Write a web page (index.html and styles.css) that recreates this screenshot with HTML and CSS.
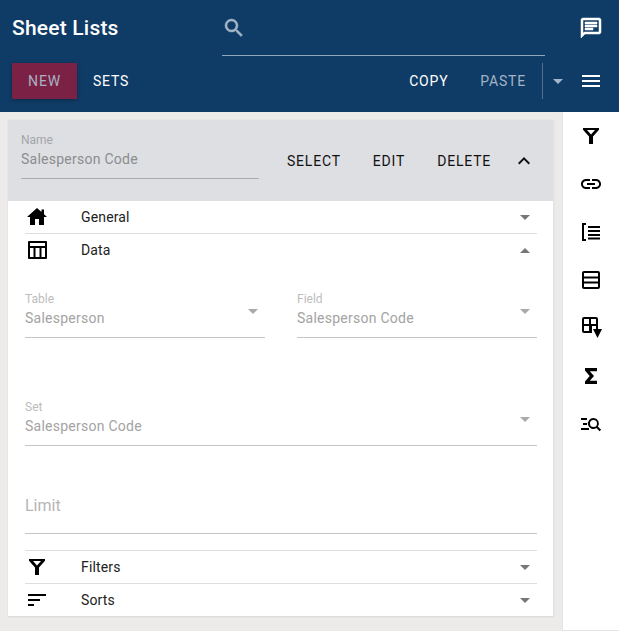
FILE: index.html
```html
<!DOCTYPE html>
<html lang="en">
<head>
<meta charset="utf-8">
<title>Sheet Lists</title>
<link rel="stylesheet" href="styles.css">
</head>
<body>
<header class="appbar">
  <div class="appbar-top">
    <h1 class="title">Sheet Lists</h1>
    <div class="search">
      <svg class="search-icon" viewBox="0 0 24 24"><path d="M15.500 14h-.79l-.28-.27A6.471 6.471 0 0 0 16 9.500 6.500 6.500 0 1 0 9.500 16c1.610 0 3.090-.59 4.230-1.570l.27.28v.79l5 4.990L20.490 19l-4.990-5zm-6 0C7.010 14 5 11.990 5 9.500S7.010 5 9.500 5 14 7.010 14 9.500 11.990 14 9.500 14z"/></svg>
    </div>
    <svg class="chat-icon" viewBox="0 0 24 24"><path d="M20 2H4c-1.100 0-2 .9-2 2v18l4-4h14c1.100 0 2-.9 2-2V4c0-1.100-.9-2-2-2zm0 14H5.200L4 17.200V4h16v12zM6 12h8v2H6zm0-3h12v2H6zm0-3h12v2H6z"/></svg>
  </div>
  <div class="appbar-actions">
    <button class="btn-new">NEW</button>
    <button class="btn-flat btn-sets">SETS</button>
    <span class="spacer"></span>
    <button class="btn-flat btn-copy">COPY</button>
    <button class="btn-flat btn-paste">PASTE</button>
    <span class="divider"></span>
    <span class="caret caret-light"></span>
    <svg class="menu-icon" viewBox="0 0 24 24"><path d="M3 18h18v-2H3v2zm0-5h18v-2H3v2zm0-7v2h18V6H3z"/></svg>
  </div>
</header>
<div class="workspace">
  <main class="content">
    <section class="card">
      <div class="card-head">
        <div class="name-field">
          <span class="head-label">Name</span>
          <span class="head-value">Salesperson Code</span>
        </div>
        <div class="head-actions">
          <button class="btn-text btn-select">SELECT</button>
          <button class="btn-text btn-edit">EDIT</button>
          <button class="btn-text btn-delete">DELETE</button>
          <svg class="chevron" viewBox="0 0 24 24"><path d="M7.410 15.410 12 10.830l4.590 4.580L18 14l-6-6-6 6z"/></svg>
        </div>
      </div>
      <div class="card-body">
        <div class="row row-rule">
          <svg class="row-icon" viewBox="0 0 24 24"><path d="M10 20v-6h4v6h5v-8h3l-3-2.700V4.500h-2.500v2.600L12 3 2 12h3v8z"/></svg>
          <span class="row-label">General</span>
          <span class="caret"></span>
        </div>
        <div class="row row-data">
          <svg class="row-icon" viewBox="0 0 24 24"><path d="M4 3h17a1 1 0 0 1 1 1v16a1 1 0 0 1-1 1H4a1 1 0 0 1-1-1V4a1 1 0 0 1 1-1zm1 2v3h15V5H5zm0 5v9h3.500v-9H5zm5.500 0v9h4v-9h-4zm6 0v9H20v-9h-3.500z"/></svg>
          <span class="row-label">Data</span>
          <span class="caret caret-up"></span>
        </div>
        <div class="form">
          <div class="form-pair">
            <div class="select">
              <span class="select-label">Table</span>
              <span class="select-value">Salesperson</span>
              <span class="caret caret-field"></span>
            </div>
            <div class="select">
              <span class="select-label">Field</span>
              <span class="select-value">Salesperson Code</span>
              <span class="caret caret-field"></span>
            </div>
          </div>
          <div class="select select-set">
            <span class="select-label">Set</span>
            <span class="select-value">Salesperson Code</span>
            <span class="caret caret-field"></span>
          </div>
          <div class="limit">Limit</div>
        </div>
        <div class="row row-rule row-top">
          <svg class="row-icon" viewBox="0 0 24 24"><path d="M4 4h16v1.800l-6 6.700V20h-4v-7.500L4 5.800V4zm4 2 4 4.500L16 6H8z"/></svg>
          <span class="row-label">Filters</span>
          <span class="caret"></span>
        </div>
        <div class="row row-last">
          <svg class="row-icon" viewBox="0 0 24 24"><path d="M3 18h6v-2H3v2zM3 6v2h18V6H3zm0 7h12v-2H3v2z"/></svg>
          <span class="row-label">Sorts</span>
          <span class="caret"></span>
        </div>
      </div>
    </section>
  </main>
  <aside class="rail">
    <svg class="rail-icon" viewBox="0 0 24 24"><path d="M4 4h16v1.800l-6 6.700V20h-4v-7.500L4 5.800V4zm4 2 4 4.500L16 6H8z"/></svg>
    <svg class="rail-icon" viewBox="0 0 24 24"><path d="M3.900 12c0-1.710 1.390-3.100 3.100-3.100h4V7H7c-2.760 0-5 2.240-5 5s2.240 5 5 5h4v-1.900H7c-1.710 0-3.100-1.390-3.100-3.100zM8 13h8v-2H8v2zm9-6h-4v1.900h4c1.710 0 3.100 1.390 3.100 3.100s-1.390 3.100-3.100 3.100h-4V17h4c2.760 0 5-2.240 5-5s-2.240-5-5-5z"/></svg>
    <svg class="rail-icon" viewBox="0 0 24 24"><path d="M3 3h4v2H5v14h2v2H3V3zm6 3h12v2H9V6zm0 4h12v2H9v-2zm0 4h12v2H9v-2zm0 3.500h12v2H9v-2z"/></svg>
    <svg class="rail-icon" viewBox="0 0 24 24"><path d="M5 3h14a2 2 0 0 1 2 2v14a2 2 0 0 1-2 2H5a2 2 0 0 1-2-2V5a2 2 0 0 1 2-2zm0 2v3.500h14V5H5zm0 5.500v3h14v-3H5zm0 5V19h14v-3.500H5z"/></svg>
    <svg class="rail-icon" viewBox="0 0 24 24"><path d="M5 1h12a2 2 0 0 1 2 2v10h-2V10h-4v7H5a2 2 0 0 1-2-2V3a2 2 0 0 1 2-2zm0 2v5h5V3H5zm7 0v5h5V3h-5zM5 10v5h5v-5H5z"/><path d="M14 13h9l-4.500 9L14 13z"/></svg>
    <svg class="rail-icon" viewBox="0 0 24 24"><path d="M6 4h12v3.200h-7.200l4.200 4.800-4.200 4.800H18V20H6v-2.600l4.700-5.400L6 6.600V4z"/></svg>
    <svg class="rail-icon" viewBox="0 0 24 24"><path d="M2 6h6v2H2V6zm2 5h4v2H4v-2zm-2 5h8v2H2v-2zM14.500 6a5.500 5.500 0 0 1 4.400 8.600l3.200 3.200-1.500 1.500-3.200-3.200A5.500 5.500 0 1 1 14.500 6zm0 2a3.500 3.500 0 1 0 0 7 3.500 3.500 0 0 0 0-7z"/></svg>
  </aside>
</div>
</body>
</html>
```
FILE: styles.css
```css
* { box-sizing: border-box; }
html, body { margin: 0; height: 100%; }
body {
  display: flex;
  flex-direction: column;
  height: 631px;
  overflow: hidden;
  font-family: Roboto, "Liberation Sans", sans-serif;
  background: #ecebe9;
}
button { font: inherit; background: none; border: 0; padding: 0; cursor: pointer; letter-spacing: .8px; }
svg { fill-rule: evenodd; }

.appbar { height: 112px; flex: none; background: #0f3c66; color: #fff; }
.appbar-top { height: 56px; display: flex; align-items: flex-start; padding-left: 12px; }
.title { width: 210px; margin: 14px 0 0; font-size: 21px; line-height: 28px; font-weight: 500; letter-spacing: .2px; }
.search { width: 323px; height: 56px; border-bottom: 1px solid #8fa5ba; padding: 16px 0 0; }
.search-icon { display: block; width: 24px; height: 24px; fill: #a5b6c6; stroke: #a5b6c6; stroke-width: .5; }
.chat-icon { width: 24px; height: 24px; fill: #fff; stroke: #fff; stroke-width: .5; margin: 16px 0 0 34px; }
.appbar-actions { height: 56px; display: flex; align-items: center; padding: 0 16px 6px 12px; }
.btn-new { width: 65px; height: 36px; background: #7c2146; color: #a9b1c2; font-size: 14px; box-shadow: 0 1px 4px rgba(0,0,0,.35); }
.btn-flat { font-size: 14px; color: #fff; }
.btn-sets { margin-left: 16px; }
.spacer { flex: 1; }
.btn-paste { margin-left: 32px; color: #a5b3c4; }
.divider { width: 1px; height: 36px; background: #51708d; margin-left: 16px; }
.caret { width: 0; height: 0; border-left: 5px solid transparent; border-right: 5px solid transparent; border-top: 5px solid #777; }
.caret-light { border-top-color: #a5b6c6; margin-left: 10px; }
.menu-icon { width: 24px; height: 24px; fill: #fff; margin-left: 16px; }

.workspace { flex: 1; display: flex; min-height: 0; }
.content { flex: 1; padding: 8px 8px 14px 8px; }
.card { height: 497px; background: #fff; box-shadow: 0 0 1px #cfcfcf; border-bottom: 1px solid #ddd; border-right: 1px solid #e2e2e2; display: flex; flex-direction: column; }
.card-head { height: 81px; flex: none; background: #dedfe3; display: flex; padding: 13px 0 0 13px; }
.name-field { width: 238px; height: 46px; border-bottom: 1px solid #a9aaad; display: flex; flex-direction: column; }
.head-label { font-size: 12px; line-height: 14px; color: #a4a5a8; }
.head-value { font-size: 14px; line-height: 18px; margin-top: 3px; letter-spacing: .25px; color: #8b8c8f; }
.head-actions { flex: 1; display: flex; align-items: center; height: 56px; padding-left: 28px; }
.btn-text { font-size: 14px; color: #111; }
.btn-edit { margin-left: 32px; }
.btn-delete { margin-left: 32px; }
.chevron { width: 24px; height: 24px; margin-left: 21px; fill: #111; }
.card-body { flex: 1; padding: 0 16px 0 17px; display: flex; flex-direction: column; }
.row { height: 33px; flex: none; display: flex; align-items: center; padding-right: 7px; }
.row-rule { border-bottom: 1px solid #dedede; }
.row-top { border-top: 1px solid #dedede; height: 34px; }
.row-data { padding-bottom: 1px; }
.row-last { height: 32px; }
.row-icon { width: 24px; height: 24px; margin-right: 32px; fill: #000; flex: none; }
.row-label { flex: 1; font-size: 14px; letter-spacing: .15px; color: #222; }
.caret-up { border-top: 0; border-bottom: 5px solid #777; }
.form { flex: 1; display: flex; flex-direction: column; }
.form-pair { display: flex; gap: 32px; margin-top: 25px; }
.select { position: relative; flex: 1; height: 46px; border-bottom: 1px solid #c4c4c4; display: flex; flex-direction: column; }
.select-label { font-size: 12px; line-height: 14px; color: #bdbdbd; }
.select-value { font-size: 14px; line-height: 18px; margin-top: 3px; letter-spacing: .25px; color: #a3a3a3; }
.caret-field { position: absolute; right: 7px; top: 17px; border-top-color: #aaa; }
.select-set { flex: none; margin-top: 62px; }
.limit { height: 48px; margin-top: 40px; border-bottom: 1px solid #c4c4c4; font-size: 16px; line-height: 24px; padding-top: 8px; color: #b5b5b5; }

.rail { width: 57px; flex: none; background: #fff; border-left: 1px solid #e4e4e4; border-bottom: 1px solid #e4e4e4; display: flex; flex-direction: column; align-items: center; padding-top: 12px; gap: 24px; }
.rail-icon { width: 24px; height: 24px; fill: #000; flex: none; }
```
